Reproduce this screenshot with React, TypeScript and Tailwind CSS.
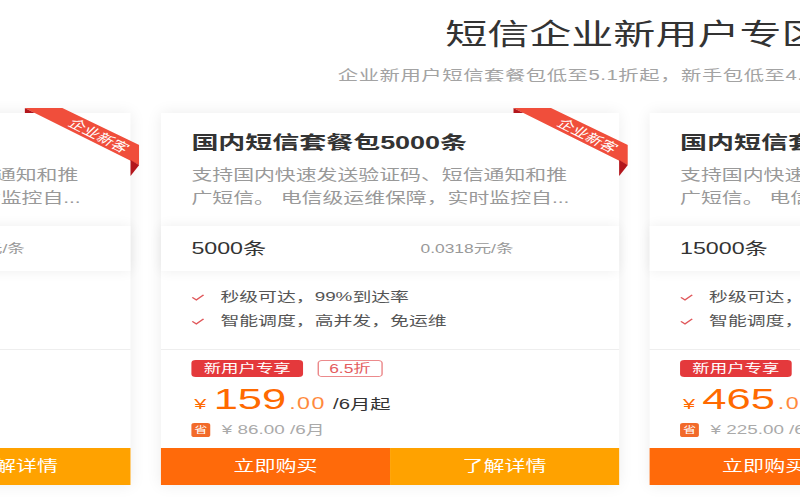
import React from "react";

type Plan = {
  title: string;
  count: string;
  unit: string;
  price: string;
  discount: string;
  save: string;
};

const plans: Plan[] = [
  { title: "国内短信套餐包1000条", count: "1000条", unit: "0.0350元/条", price: "35", discount: "7折", save: "15.00" },
  { title: "国内短信套餐包5000条", count: "5000条", unit: "0.0318元/条", price: "159", discount: "6.5折", save: "86.00" },
  { title: "国内短信套餐包15000条", count: "15000条", unit: "0.0310元/条", price: "465", discount: "6.7折", save: "225.00" },
  { title: "国内短信套餐包50000条", count: "50000条", unit: "0.0300元/条", price: "1500", discount: "6.8折", save: "700.00" },
];

const features = ["秒级可达，99%到达率", "智能调度，高并发，免运维"];

function Ribbon() {
  return (
    <div className="absolute top-[-5px] right-[-6px] z-10 h-[72px] w-[79px]">
      <svg viewBox="0 0 79 72" className="h-full w-full" preserveAspectRatio="none">
        <polygon points="0,0 26,0 79,37 79,57 7,5" fill="#f04e3b" />
        <polygon points="0,0 7,5 0,5" fill="#b3161c" />
        <polygon points="73,52 79,57 73,68" fill="#b3161c" />
      </svg>
      <span className="absolute left-[51px] top-[28px] -translate-x-1/2 -translate-y-1/2 rotate-[36deg] whitespace-nowrap text-[12px] leading-none text-white">
        企业新客
      </span>
    </div>
  );
}

function Check() {
  return (
    <svg viewBox="0 0 9 7" className="mr-[11px] h-[7px] w-[9px] shrink-0">
      <polyline points="0.6,3.4 3.4,6 8.4,0.8" fill="none" stroke="#e0585b" strokeWidth="1.2" />
    </svg>
  );
}

function Card({ p }: { p: Plan }) {
  return (
    <div className="relative w-[316px] shrink-0 bg-white shadow-[0_0_12px_rgba(0,0,0,0.08)]">
      <Ribbon />
      <div className="pl-[21px] pt-[17px] pb-[16px]">
        <div className="whitespace-nowrap text-[18.6px] font-bold leading-[26px] text-[#333]">{p.title}</div>
        <div className="mt-[8px] whitespace-nowrap text-[14.4px] leading-[23px] text-[#999]">
          <div>支持国内快速发送验证码、短信通知和推</div>
          <div>广短信。 电信级运维保障，实时监控自...</div>
        </div>
      </div>
      <div className="relative flex h-[45px] items-center bg-white pl-[21px] shadow-[0_0_10px_rgba(0,0,0,0.07)]">
        <span className="w-[158px] text-[16px] text-[#333]">{p.count}</span>
        <span className="text-[12px] text-[#999]">{p.unit}</span>
      </div>
      <div className="border-b border-[#eee] pl-[21px] pt-[14px] pb-[16px] text-[13px] leading-[24px] text-[#555]">
        {features.map((f) => (
          <div key={f} className="flex items-center whitespace-nowrap">
            <Check />
            <span>{f}</span>
          </div>
        ))}
      </div>
      <div className="pl-[21px] pt-[10px] pb-[8px]">
        <div className="flex h-[17px] items-center">
          <span className="flex h-[17px] w-[77px] items-center justify-center rounded-[3px] bg-[#e4393c] text-[12px] leading-none text-white">
            新用户专享
          </span>
          <span className="ml-[10px] flex h-[17px] items-center rounded-[3px] border border-[#ec8a8c] px-[7px] text-[12px] leading-none text-[#e45c5e]">
            {p.discount}
          </span>
        </div>
        <div className="mt-[4px] flex h-[36px] items-baseline whitespace-nowrap leading-[36px]">
          <span className="ml-[2px] mr-[5px] text-[15px] text-[#ff6a00]">¥</span>
          <span className="text-[30px] text-[#ff6a00]">{p.price}</span>
          <span className="ml-[2px] text-[16px] tracking-[1px] text-[#ff8a3d]">.00</span>
          <span className="ml-[5px] text-[14px] text-[#333]">/6月起</span>
        </div>
        <div className="mt-[3px] flex h-[20px] items-center whitespace-nowrap">
          <span className="flex h-[14px] w-[13px] items-center justify-center rounded-[2px] bg-[#f26a2a] text-[9px] leading-none text-white">
            省
          </span>
          <span className="ml-[8px] text-[13px] text-[#aaa]">¥ {p.save} /6月</span>
        </div>
      </div>
      <div className="flex h-[37px] text-[14.5px] text-white">
        <div className="flex flex-1 items-center justify-center bg-[#ff6a0a]">立即购买</div>
        <div className="flex flex-1 items-center justify-center bg-[#ffa200]">了解详情</div>
      </div>
    </div>
  );
}

export default function App() {
  return (
    <div className="h-[500px] w-[800px] overflow-hidden bg-white font-['Liberation_Sans','Noto_Sans_CJK_SC',sans-serif]">
      <div className="w-[552px] origin-top-left scale-x-[1.45]">
        <div className="ml-[-226px] w-[1327px]">
          <div className="pt-[15px] text-center text-[29px] leading-[40px] whitespace-nowrap text-[#333]">
            短信企业新用户专区
          </div>
          <div className="mt-[10px] pl-[459px] text-[14px] leading-[20px] tracking-[0.4px] whitespace-nowrap text-[#a3a3a3]">
            企业新用户短信套餐包低至5.1折起，新手包低至4.5折
          </div>
          <div className="mt-[28px] flex gap-[21px]">
            {plans.map((p) => (
              <Card key={p.title} p={p} />
            ))}
          </div>
        </div>
      </div>
    </div>
  );
}
